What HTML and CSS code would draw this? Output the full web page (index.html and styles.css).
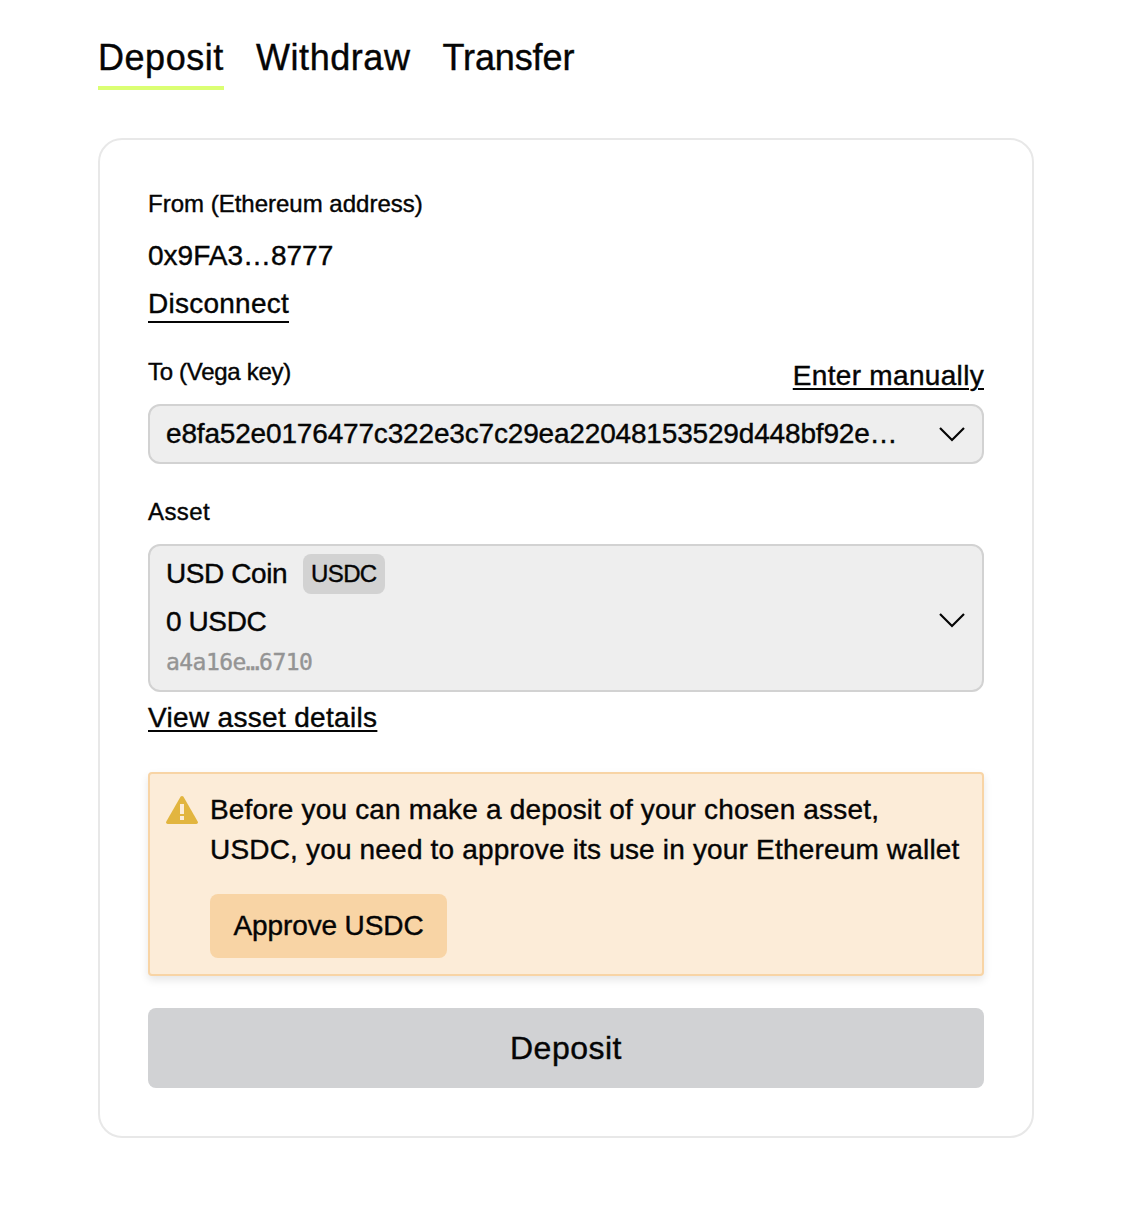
FILE: index.html
```html
<!DOCTYPE html>
<html lang="en">
<head>
<meta charset="utf-8">
<title>Deposit</title>
<link rel="stylesheet" href="styles.css">
</head>
<body>
<main class="page">
  <nav class="tabs">
    <a class="tab tab-active">Deposit</a>
    <a class="tab">Withdraw</a>
    <a class="tab tab-transfer">Transfer</a>
  </nav>
  <section class="card">
    <div class="label">From (Ethereum address)</div>
    <div class="address">0x9FA3…8777</div>
    <a class="disconnect">Disconnect</a>
    <div class="field-head">
      <div class="label label-key">To (Vega key)</div>
      <a class="link">Enter manually</a>
    </div>
    <div class="select select-key">
      <span class="key">e8fa52e0176477c322e3c7c29ea22048153529d448bf92e…</span>
      <svg class="chevron" viewBox="0 0 28 16"><path d="M2 2 14 14 26 2"/></svg>
    </div>
    <div class="label label-asset">Asset</div>
    <div class="select select-asset">
      <div class="asset">
        <div class="asset-name"><span class="coin">USD Coin</span><span class="badge">USDC</span></div>
        <div class="balance">0 USDC</div>
        <div class="asset-id">a4a16e…6710</div>
      </div>
      <svg class="chevron" viewBox="0 0 28 16"><path d="M2 2 14 14 26 2"/></svg>
    </div>
    <a class="link link-details">View asset details</a>
    <div class="notice">
      <svg class="warning" viewBox="0 0 32 28"><path fill="#e2b53f" d="M14.5.8Q16-.8 17.5.8L31.7 25.4Q32.5 28 30.3 28H1.7Q-.5 28 .3 25.4Z"/><path fill="#fcecd8" d="M14 8h4v10h-4zM14 20h4v4h-4z"/></svg>
      <div class="notice-body">
        <p class="notice-text">Before you can make a deposit of your chosen asset,<br>USDC, you need to approve its use in your Ethereum wallet</p>
        <button class="approve">Approve USDC</button>
      </div>
    </div>
    <button class="submit">Deposit</button>
  </section>
</main>
</body>
</html>
```
FILE: styles.css
```css
* { box-sizing: border-box; }
body {
  margin: 0;
  background: #fff;
  color: #050505;
  font: 28px/40px "Liberation Sans", Arial, sans-serif;
  -webkit-text-stroke: 0.4px currentColor;
}
button {
  border: 0;
  color: inherit;
  font: inherit;
  -webkit-text-stroke: inherit;
}
.page { padding: 32px 112px 0 98px; }
.tabs { display: flex; gap: 32px; height: 58px; }
.tab {
  height: 58px;
  font-size: 36px;
  line-height: 52px;
  letter-spacing: 0.55px;
  white-space: nowrap;
}
.tab-active { width: 126px; border-bottom: 4px solid #dbff73; }
.tab-transfer { letter-spacing: -0.1px; }
.card {
  width: 936px;
  height: 1000px;
  margin-top: 48px;
  padding: 48px;
  border: 2px solid #e8e8e8;
  border-radius: 24px;
  display: flex;
  flex-direction: column;
  align-items: flex-start;
}
.label { font-size: 24px; line-height: 32px; }
.address { margin-top: 16px; }
.disconnect {
  height: 40px;
  margin-top: 7px;
  line-height: 42px;
  letter-spacing: 0.25px;
  border-bottom: 2px solid #050505;
}
.field-head {
  width: 100%;
  height: 48px;
  margin-top: 33px;
  display: flex;
  justify-content: space-between;
}
.label-key { letter-spacing: -0.3px; }
.link {
  letter-spacing: 0.32px;
  text-decoration: underline;
  text-decoration-thickness: 2px;
  text-underline-offset: 3px;
}
.select {
  width: 100%;
  padding: 0 16px;
  background: #eee;
  border: 2px solid #d2d2d2;
  border-radius: 12px;
  display: flex;
  justify-content: space-between;
  align-items: center;
}
.select-key { height: 60px; }
.key { letter-spacing: -0.17px; }
.chevron {
  width: 28px;
  height: 16px;
  fill: none;
  stroke: #050505;
  stroke-width: 2.2;
}
.label-asset { margin: 32px 0 16px; letter-spacing: 0.4px; }
.select-asset { height: 148px; }
.select-asset .chevron { margin-top: 3px; }
.asset-name { display: flex; align-items: center; height: 40px; }
.coin { width: 137px; letter-spacing: -0.4px; }
.badge {
  width: 82px;
  padding-left: 8px;
  background: #d2d2d2;
  border-radius: 8px;
  font-size: 24px;
  letter-spacing: -0.6px;
}
.balance { margin-top: 8px; letter-spacing: -0.4px; }
.asset-id {
  color: #949494;
  font: 23px/40px "DejaVu Sans Mono", monospace;
  letter-spacing: -0.55px;
}
.link-details { margin-top: 6px; }
.notice {
  width: 100%;
  height: 204px;
  margin-top: 34px;
  padding: 16px;
  background: #fcecd8;
  border: 2px solid #f8d4a5;
  border-radius: 4px;
  box-shadow: 0 4px 8px rgba(0, 0, 0, 0.1);
  display: flex;
  gap: 12px;
}
.warning { width: 32px; height: 28px; margin-top: 6px; flex: none; }
.notice-text { margin: 0 0 24px; letter-spacing: 0.18px; white-space: nowrap; }
.approve {
  width: 237px;
  height: 64px;
  padding: 0;
  background: #f8d4a5;
  border-radius: 8px;
  letter-spacing: -0.12px;
}
.submit {
  width: 100%;
  height: 80px;
  margin-top: 32px;
  background: #d1d2d4;
  border-radius: 8px;
  font-size: 32px;
  letter-spacing: 0.5px;
}
```
